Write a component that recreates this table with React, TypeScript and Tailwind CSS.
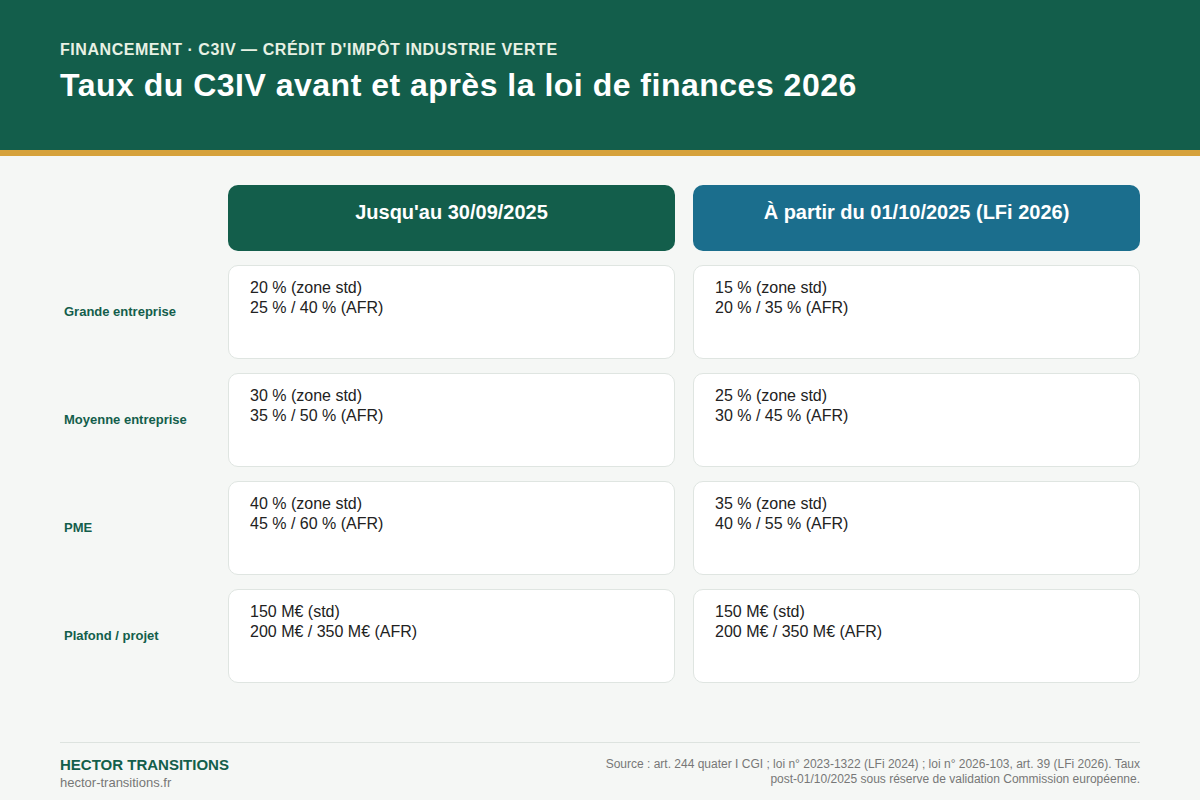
const rows = [
  {
    label: 'Grande entreprise',
    before: ['20 % (zone std)', '25 % / 40 % (AFR)'],
    after: ['15 % (zone std)', '20 % / 35 % (AFR)'],
  },
  {
    label: 'Moyenne entreprise',
    before: ['30 % (zone std)', '35 % / 50 % (AFR)'],
    after: ['25 % (zone std)', '30 % / 45 % (AFR)'],
  },
  {
    label: 'PME',
    before: ['40 % (zone std)', '45 % / 60 % (AFR)'],
    after: ['35 % (zone std)', '40 % / 55 % (AFR)'],
  },
  {
    label: 'Plafond / projet',
    before: ['150 M€ (std)', '200 M€ / 350 M€ (AFR)'],
    after: ['150 M€ (std)', '200 M€ / 350 M€ (AFR)'],
  },
]

function Cell({ lines }: { lines: string[] }) {
  return (
    <div className="h-[94px] rounded-[10px] border border-[#dfe5e1] bg-white px-[21px] pt-[12px] text-[16px] leading-[20px] text-[#222]">
      {lines.map((l) => (
        <div key={l}>{l}</div>
      ))}
    </div>
  )
}

export default function App() {
  return (
    <div className="flex h-[800px] w-[1200px] flex-col bg-[#f5f7f5] font-['Liberation_Sans',Arial,sans-serif]">
      <header className="h-[156px] border-b-[6px] border-[#d6a23c] bg-[#135e4b] px-[60px] pt-[40px]">
        <p className="text-[16px] font-bold uppercase leading-[20px] tracking-[0.55px] text-[#e8f1e4]">
          FINANCEMENT · C3IV — CRÉDIT D'IMPÔT INDUSTRIE VERTE
        </p>
        <h1 className="mt-[5px] text-[32px] font-bold leading-[40px] tracking-[0.5px] text-white">
          Taux du C3IV avant et après la loi de finances 2026
        </h1>
      </header>

      <main className="flex-1 px-[60px] pt-[29px]">
        <div className="grid grid-cols-[150px_1fr_1fr] gap-x-[18px] gap-y-[14px]">
          <div />
          <div className="h-[66px] rounded-[10px] bg-[#135e4b] pt-[15px] text-center text-[20px] font-bold leading-[24px] text-white">
            Jusqu'au 30/09/2025
          </div>
          <div className="h-[66px] rounded-[10px] bg-[#1b6e8d] pt-[15px] text-center text-[20px] font-bold leading-[24px] text-white">
            À partir du 01/10/2025 (LFi 2026)
          </div>
          {rows.map((r) => (
            <>
              <div key={r.label + 'l'} className="flex items-center pl-[4px] text-[13px] font-bold text-[#135e4b]">
                {r.label}
              </div>
              <Cell key={r.label + 'b'} lines={r.before} />
              <Cell key={r.label + 'a'} lines={r.after} />
            </>
          ))}
        </div>
      </main>

      <footer className="mx-[60px] flex justify-between border-t border-[#dde3df] pb-[8px] pt-[13px]">
        <div>
          <p className="text-[15px] font-bold leading-[18px] text-[#135e4b]">HECTOR TRANSITIONS</p>
          <p className="text-[13px] leading-[18px] text-[#777]">hector-transitions.fr</p>
        </div>
        <p className="w-[560px] pt-[1px] text-right text-[12px] leading-[15px] text-[#777]">
          Source : art. 244 quater I CGI ; loi n° 2023-1322 (LFi 2024) ; loi n° 2026-103, art. 39 (LFi 2026). Taux post-01/10/2025 sous réserve de validation Commission européenne.
        </p>
      </footer>
    </div>
  )
}
